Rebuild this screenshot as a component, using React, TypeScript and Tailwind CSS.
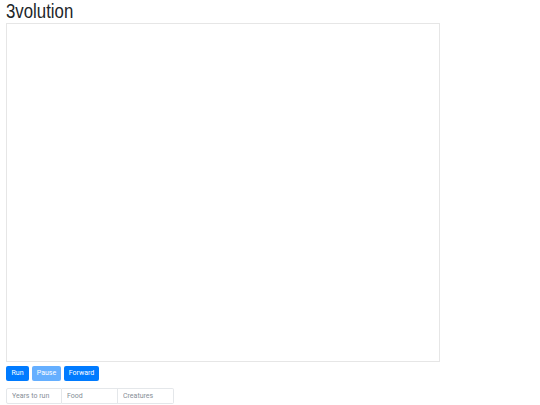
export default function App() {
  return (
    <div className="px-[6px] bg-white min-h-[405px] font-['Roboto','Liberation_Sans',Arial,sans-serif] text-[#212529]">
      <h1 className="text-[20px] font-normal leading-[22px] h-[22px] font-['Liberation_Sans',Arial,sans-serif] origin-left scale-x-[0.84]">3volution</h1>
      <div className="w-[434px] h-[339px] mt-[1px] border border-[#e6e6e6] bg-white" />
      <div className="flex gap-[3px] mt-[4px]">
        <button className="w-[23px] h-[15px] rounded-[2px] bg-[#007bff] text-white text-[7px] leading-none">Run</button>
        <button className="w-[29px] h-[15px] rounded-[2px] bg-[#007bff] opacity-60 text-white text-[7px] leading-none">Pause</button>
        <button className="w-[35px] h-[15px] rounded-[2px] bg-[#007bff] text-white text-[7px] leading-none">Forward</button>
      </div>
      <div className="flex mt-[7px]">
        <input placeholder="Years to run" className="w-[56px] h-[16px] px-[5px] border border-[#e4e7ea] rounded-l-[2px] text-[7px] placeholder:text-[#868e96] outline-none" />
        <input placeholder="Food" className="w-[56px] h-[16px] px-[5px] border border-l-0 border-[#e4e7ea] text-[7px] placeholder:text-[#868e96] outline-none" />
        <input placeholder="Creatures" className="w-[56px] h-[16px] px-[5px] border border-l-0 border-[#e4e7ea] rounded-r-[2px] text-[7px] placeholder:text-[#868e96] outline-none" />
      </div>
    </div>
  )
}
